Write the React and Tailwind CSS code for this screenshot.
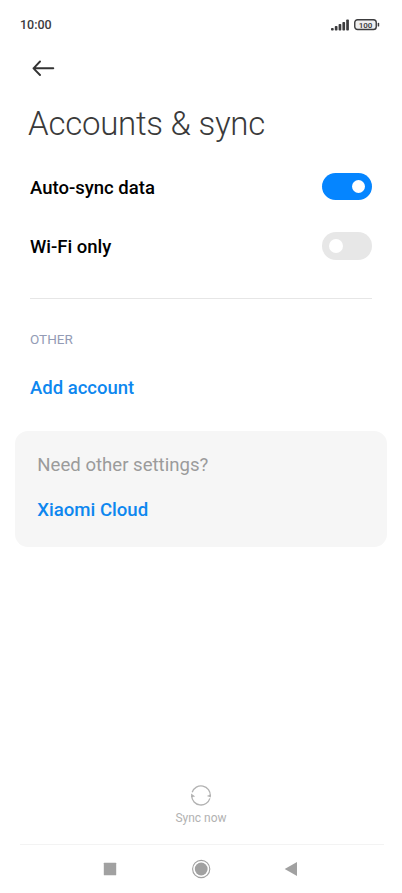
import { useState } from 'react'

const SIGNAL_BARS = [
  { x: 0, h: 2.5 },
  { x: 3.8, h: 4.5 },
  { x: 7.6, h: 6.5 },
  { x: 11.4, h: 8.5 },
  { x: 15.2, h: 11 },
]

function StatusBar() {
  return (
    <div className="h-[50px] pl-5 pr-[22px] flex items-center justify-between text-[#3c3c3e]">
      <span className="text-[12.5px] leading-none font-medium">10:00</span>
      <div className="flex items-center gap-[4px]">
        <svg width="19" height="12" viewBox="0 0 19 12" fill="currentColor">
          {SIGNAL_BARS.map(b => (
            <rect key={b.x} x={b.x} y={11.5 - b.h} width="2.7" height={b.h} rx="0.8" />
          ))}
        </svg>
        <svg width="26" height="12" viewBox="0 0 26 12">
          <rect x="0.75" y="0.75" width="21.5" height="9.8" rx="2.8" fill="#f0f0f0" stroke="currentColor" strokeWidth="1.4" />
          <rect x="23.7" y="3.8" width="1.5" height="3.8" rx="0.7" fill="currentColor" />
          <text x="11.5" y="8.6" textAnchor="middle" fill="currentColor" className="text-[8px] font-semibold">100</text>
        </svg>
      </div>
    </div>
  )
}

function Toggle({ label, checked, onChange }) {
  return (
    <button
      role="switch"
      aria-checked={checked}
      aria-label={label}
      onClick={() => onChange(!checked)}
      className={`w-[50px] h-[27.5px] rounded-full flex items-center px-[7px] ${checked ? 'bg-[#0585ff] justify-end' : 'bg-[#e7e7e7] justify-start'}`}
    >
      <span className="w-[13.5px] h-[13.5px] rounded-full bg-white" />
    </button>
  )
}

function SettingRow({ label, checked, onChange }) {
  return (
    <div className="h-[59.5px] flex items-center justify-between">
      <span className="pt-1 text-[18.5px] font-medium text-black">{label}</span>
      <Toggle label={label} checked={checked} onChange={onChange} />
    </div>
  )
}

function NavBar() {
  return (
    <nav className="h-[49px] ml-5 mr-[18px] border-t border-[#f3f3f3] text-[#a1a1a1] flex items-center justify-center gap-[71px]">
      <svg width="20" height="20" viewBox="0 0 20 20" fill="currentColor">
        <rect x="2.8" y="3.8" width="12.4" height="12.4" rx="0.5" />
      </svg>
      <svg width="20" height="20" viewBox="0 0 20 20" fill="currentColor">
        <circle cx="9.2" cy="10" r="8.6" fill="none" stroke="currentColor" strokeWidth="1.1" />
        <circle cx="9.2" cy="10" r="6.4" />
      </svg>
      <svg width="20" height="20" viewBox="0 0 20 20" fill="currentColor">
        <path d="M1.7 10 14 3v14z" />
      </svg>
    </nav>
  )
}

export default function App() {
  const [autoSync, setAutoSync] = useState(true)
  const [wifiOnly, setWifiOnly] = useState(false)

  return (
    <div className="w-[402px] h-[893px] overflow-hidden bg-white flex flex-col font-['Roboto',sans-serif]">
      <StatusBar />

      {/* Header */}
      <header className="px-7">
        <button aria-label="Back" className="block h-9 pl-1">
          <svg width="24" height="16" viewBox="0 0 24 16" fill="none" stroke="#333" strokeWidth="1.9" strokeLinecap="round" strokeLinejoin="round">
            <path d="M8 1.5 1.5 8.3 8 15M1.5 8.3H21.3" />
          </svg>
        </button>
        <h1 className="mt-[18px] text-[33px] leading-10 tracking-[-0.25px] font-light text-[#3a3a3a] whitespace-nowrap">Accounts &amp; sync</h1>
      </header>

      <main className="flex-1">
        <div className="px-[30px] pt-[12.7px]">
          <SettingRow label="Auto-sync data" checked={autoSync} onChange={setAutoSync} />
          <SettingRow label="Wi-Fi only" checked={wifiOnly} onChange={setWifiOnly} />
          <div className="mt-[22.3px] h-px bg-[#e6e6e6]" />
          <p className="mt-[30px] text-[13.5px] leading-5 text-[#939bb5]">OTHER</p>
          <button className="mt-[25px] block text-[18.5px] leading-7 font-medium text-[#0d87ef]">Add account</button>
        </div>

        {/* Related settings */}
        <section className="mx-[15px] mt-[29px] h-[116px] rounded-[13px] bg-[#f6f6f6] px-[22.3px] pt-5">
          <p className="text-[18.6px] leading-7 text-[#9b9b9b]">Need other settings?</p>
          <button className="mt-[17px] block text-[18.6px] leading-7 font-medium text-[#0d87ef]">Xiaomi Cloud</button>
        </section>
      </main>

      <button className="self-center mb-[18px] flex flex-col items-center text-[#b2b2b2]">
        <svg width="22" height="22" viewBox="0 0 22 22" fill="none" stroke="currentColor" strokeWidth="1.3">
          <path d="M1.7 12A9.3 9.3 0 0 0 19.9 14.4" />
          <path d="M2.2 8.3A9.3 9.3 0 0 1 20.3 12" />
          <path d="M1.1 9.5 5.2 12.6 1.1 13.2zM20.9 13.6 16.8 12 20.9 10.2z" fill="currentColor" stroke="none" />
        </svg>
        <span className="mt-1 text-[12px] leading-4">Sync now</span>
      </button>

      <NavBar />
    </div>
  )
}
